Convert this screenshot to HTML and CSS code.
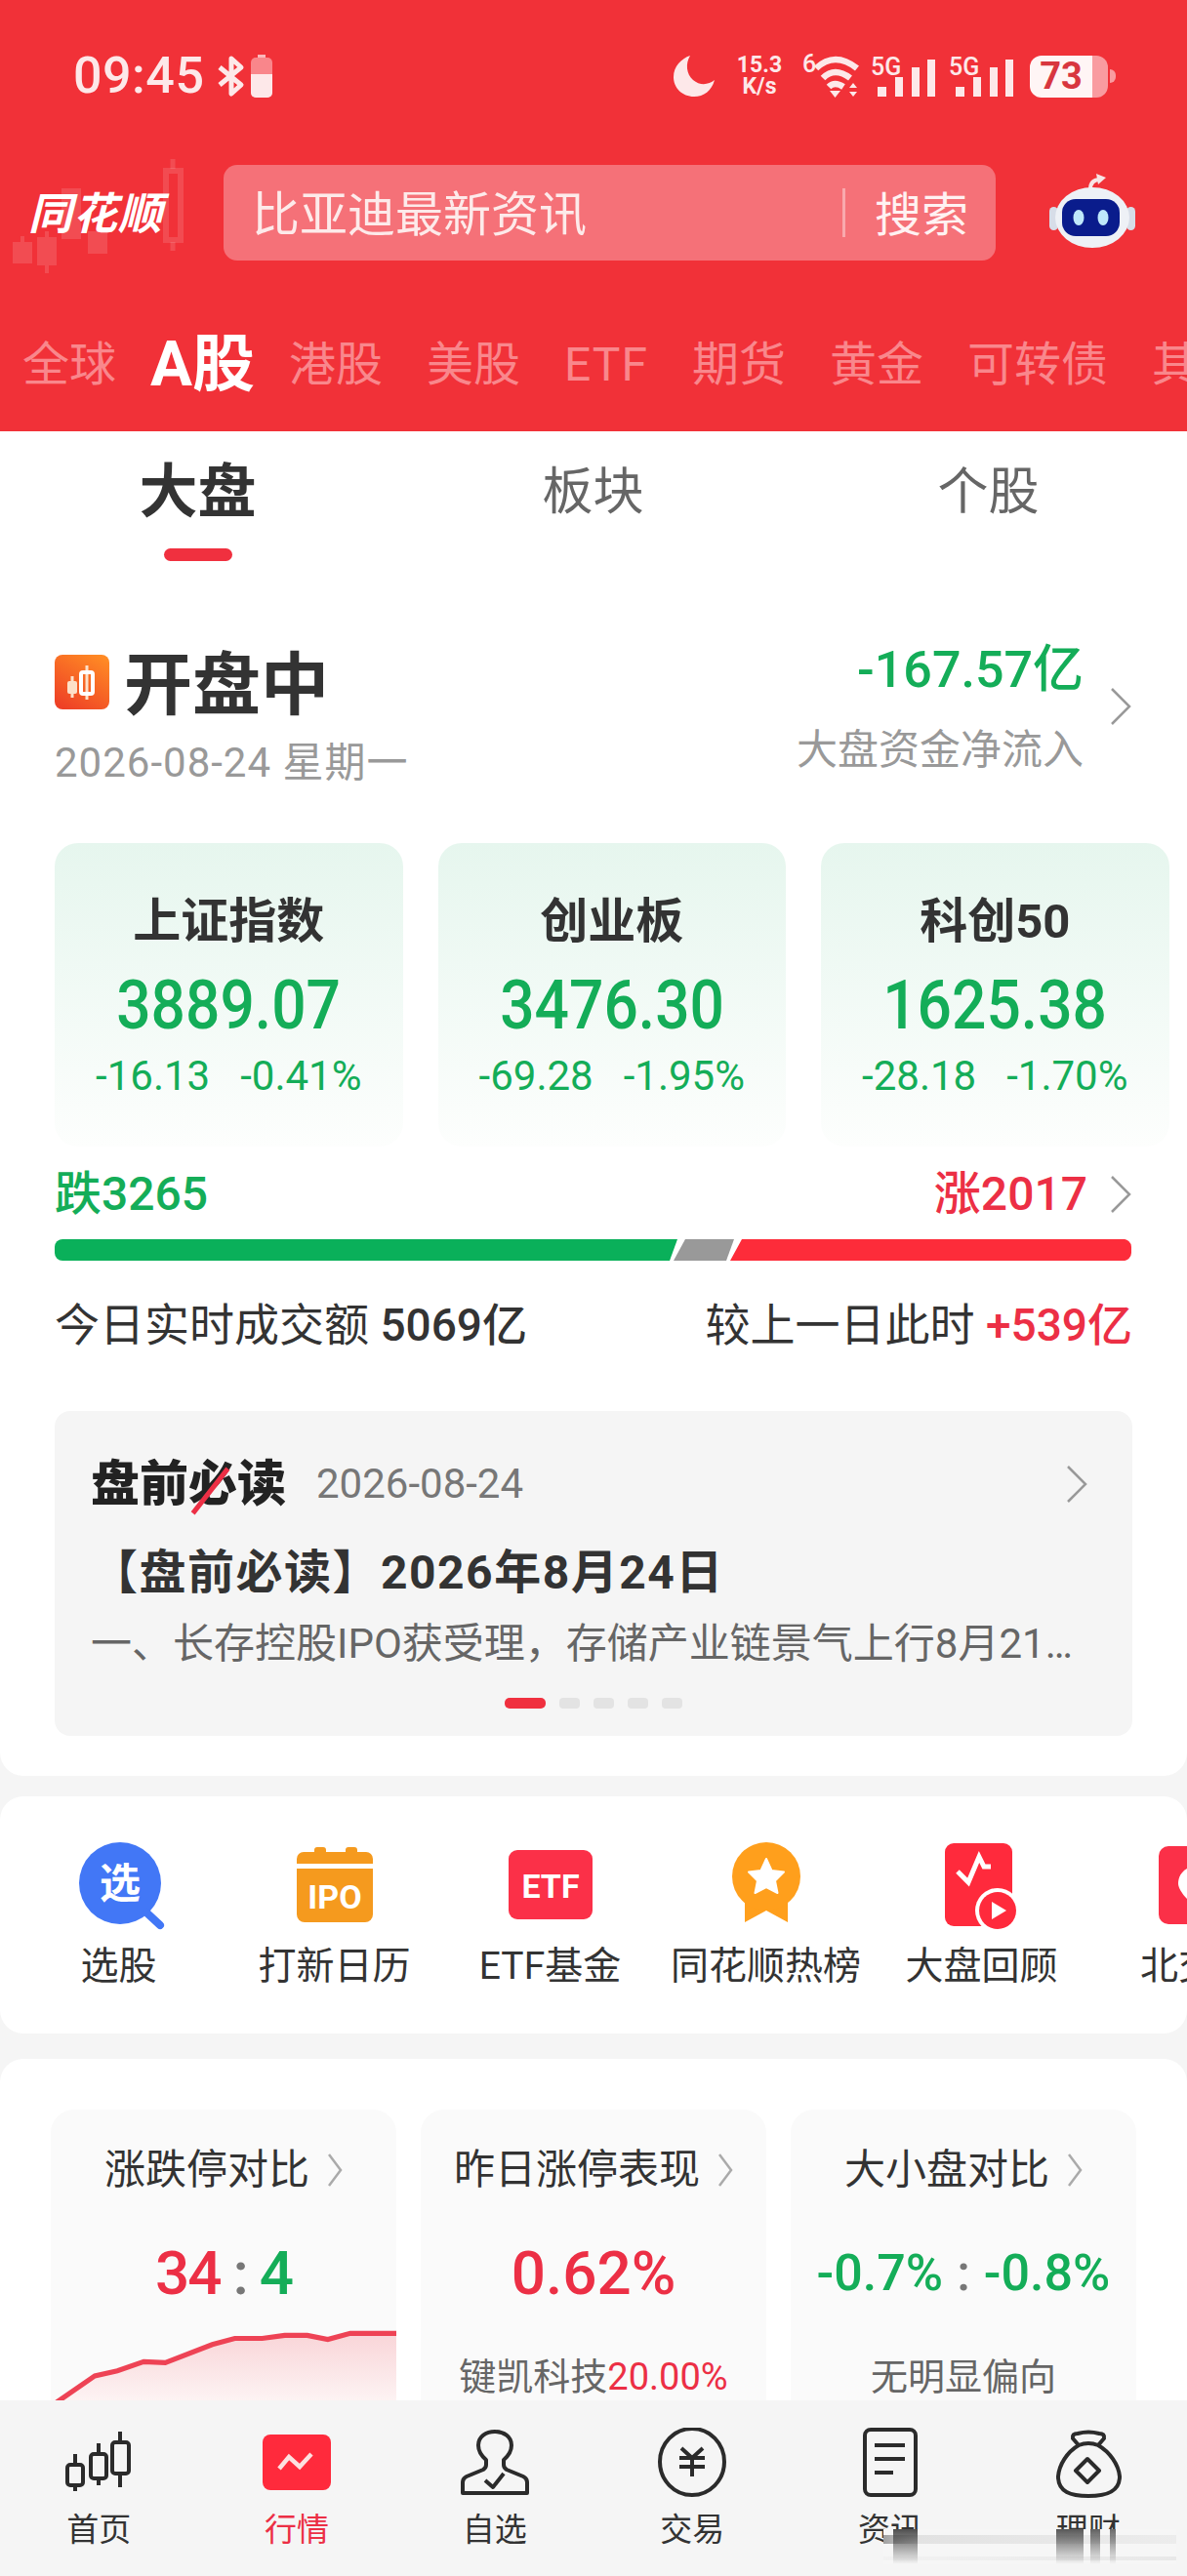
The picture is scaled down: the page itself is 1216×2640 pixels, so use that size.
FILE: index.html
```html
<!DOCTYPE html>
<html lang="zh-CN">
<head>
    <meta charset="UTF-8">
    <meta name="viewport" content="width=device-width, initial-scale=1.0">
    <title>同花顺 - 行情</title>
    <link rel="stylesheet" href="styles.css">
</head>
<body>

    <!-- 顶部红色区域 -->
    <header class="top">
        <div class="status">
            <div class="status-left">
                <span class="clock">09:45</span>
                <svg class="bt" viewBox="0 0 32 44"><path d="M4 13 L26 31 L16 40 V4 L26 13 L4 31" fill="none" stroke="#fde8e9" stroke-width="5" stroke-linejoin="round"/></svg>
                <svg class="mini-batt" viewBox="0 0 22 44"><rect x="7" y="0" width="8" height="4" fill="#fbb7ba"/><rect x="0" y="3" width="22" height="41" rx="5" fill="#f9868b"/><path d="M0 20 H22 V39 a5 5 0 0 1 -5 5 H5 a5 5 0 0 1 -5 -5 Z" fill="#fde8e9"/></svg>
            </div>
            <div class="status-right">
                <svg class="moon" viewBox="0 0 42 42"><path d="M17 0 C8 3 0 11 0 22 C0 33 9 42 21 42 C31 42 39 36 42 25 C36 30 27 31 20 25 C13 19 12 8 17 0 Z" fill="#fde8e9"/></svg>
                <div class="speed"><span>15.3</span><span>K/s</span></div>
                <svg class="wifi" viewBox="0 0 58 46">
                    <text x="0" y="19" class="sig-text">6</text>
                    <path d="M14 15 Q33 -3 56 15 M21 25 Q33 13 49 25 M27 34 Q33 28 42 34" fill="none" stroke="#fde8e9" stroke-width="6.5"/>
                    <path d="M28 38 H39 L33.5 45 Z M48 35 L52 30 L56 35 Z M48 39 H56 L52 44 Z" fill="#fde8e9"/>
                </svg>
                <svg class="signal" viewBox="0 0 68 44"><text x="0" y="21" class="sig-text">5G</text><path d="M7 33 H16 V43 H7 Z M25 23 H33 V43 H25 Z M42 13 H50 V43 H42 Z M58 5 H66 V43 H58 Z" fill="#fde8e9"/></svg>
                <svg class="signal" viewBox="0 0 68 44"><text x="0" y="21" class="sig-text">5G</text><path d="M7 33 H16 V43 H7 Z M25 23 H33 V43 H25 Z M42 13 H50 V43 H42 Z M58 5 H66 V43 H58 Z" fill="#fde8e9"/></svg>
                <div class="battery"><div class="battery-body"><span class="battery-num">73</span></div><i class="battery-cap"></i></div>
            </div>
        </div>

        <div class="search-row">
            <div class="logo">
                <svg class="logo-candles" viewBox="0 0 200 130">
                    <g fill="#fff" opacity="0.13">
                        <path d="M13 88 H33 V110 H13 Z M21 82 H25 V88 H21 Z"/>
                        <path d="M38 83 H58 V112 H38 Z M46 77 H50 V120 H46 Z"/>
                        <path d="M63 33 H83 V85 H63 Z"/>
                        <path d="M90 77 H110 V100 H90 Z"/>
                    </g>
                    <path d="M177 3 V13 M177 88 V97" stroke="#fff" stroke-width="5" opacity="0.13"/>
                    <rect x="170" y="15" width="15" height="71" fill="none" stroke="#fff" stroke-width="6" opacity="0.13"/>
                </svg>
                <span class="logo-text">同花顺</span>
            </div>
            <div class="search-box">
                <span class="search-hint">比亚迪最新资讯</span>
                <span class="search-btn">搜索</span>
            </div>
            <svg class="robot" viewBox="0 0 88 80">
                <path d="M42 18 Q42 8 52 8" fill="none" stroke="#f7e4e6" stroke-width="4"/>
                <path d="M48 2 L58 6 L50 13 Z" fill="#f7e4e6"/>
                <rect x="0" y="36" width="9" height="24" rx="4.5" fill="#d7dde8"/>
                <rect x="79" y="36" width="9" height="24" rx="4.5" fill="#d7dde8"/>
                <ellipse cx="44" cy="47" rx="38" ry="31" fill="#eef1f6"/>
                <rect x="13" y="28" width="59" height="38" rx="14" fill="#0a1c8c"/>
                <ellipse cx="30" cy="47" rx="5.5" ry="8" fill="#bfe8fb"/>
                <ellipse cx="55" cy="47" rx="5.5" ry="8" fill="#bfe8fb"/>
            </svg>
        </div>

        <nav class="market-tabs">
            <span>全球</span>
            <span class="active">A股</span>
            <span>港股</span>
            <span>美股</span>
            <span class="etf">ETF</span>
            <span>期货</span>
            <span>黄金</span>
            <span>可转债</span>
            <span>其他</span>
        </nav>
    </header>

    <main class="content">

        <section class="panel panel-market">
            <div class="sub-tabs">
                <div class="sub-tab active">大盘<i></i></div>
                <div class="sub-tab">板块</div>
                <div class="sub-tab">个股</div>
            </div>

            <div class="summary">
                <div>
                    <div class="summary-title">
                        <svg class="open-icon" viewBox="0 0 56 56">
                            <defs><linearGradient id="openGrad" x1="0.8" y1="0" x2="0.2" y2="1"><stop offset="0" stop-color="#ff8a24"/><stop offset="1" stop-color="#ee4026"/></linearGradient></defs>
                            <rect width="56" height="56" rx="8" fill="url(#openGrad)"/>
                            <path d="M18 22 V44 M33 11 V46" stroke="#fde0c8" stroke-width="3"/>
                            <rect x="13" y="27" width="10" height="13" rx="2" fill="#fde0c8"/>
                            <rect x="27" y="18" width="12" height="22" rx="2" fill="none" stroke="#fff" stroke-width="4"/>
                        </svg>
                        <span class="summary-name">开盘中</span>
                    </div>
                    <div class="summary-date">2026-08-24 星期一</div>
                </div>
                <div class="flow">
                    <div class="flow-text">
                        <div class="flow-num">-167.57亿</div>
                        <div class="flow-label">大盘资金净流入</div>
                    </div>
                    <svg class="chev chev-big" viewBox="0 0 24 40"><path d="M3 2 L21 20 L3 38" fill="none" stroke="#999" stroke-width="2.5"/></svg>
                </div>
            </div>

            <div class="index-cards">
                <div class="index-card">
                    <div class="index-name">上证指数</div>
                    <div class="index-num"><span>3889.07</span></div>
                    <div class="index-sub"><span>-16.13</span><span>-0.41%</span></div>
                </div>
                <div class="index-card">
                    <div class="index-name">创业板</div>
                    <div class="index-num"><span>3476.30</span></div>
                    <div class="index-sub"><span>-69.28</span><span>-1.95%</span></div>
                </div>
                <div class="index-card">
                    <div class="index-name">科创50</div>
                    <div class="index-num"><span>1625.38</span></div>
                    <div class="index-sub"><span>-28.18</span><span>-1.70%</span></div>
                </div>
            </div>

            <div class="updown">
                <span class="green">跌3265</span>
                <div class="updown-right">
                    <span class="red">涨2017</span>
                    <svg class="chev chev-big" viewBox="0 0 24 40"><path d="M3 2 L21 20 L3 38" fill="none" stroke="#999" stroke-width="2.5"/></svg>
                </div>
            </div>

            <svg class="ratio-bar" viewBox="0 0 1104 22">
                <path d="M8 0 H638 L630 22 H8 A8 8 0 0 1 0 14 V8 A8 8 0 0 1 8 0 Z" fill="#0ab05a"/>
                <path d="M646 0 H696 L688 22 H634 Z" fill="#999"/>
                <path d="M704 0 H1094 A8 8 0 0 1 1103 8 V14 A8 8 0 0 1 1094 22 H692 Z" fill="#fd2c3a"/>
            </svg>

            <div class="volume">
                <div>今日实时成交额 <b>5069亿</b></div>
                <div>较上一日此时 <b class="red">+539亿</b></div>
            </div>

            <div class="read-card">
                <div class="read-head">
                    <div class="read-brand">
                        <span class="read-logo">盘前必读<i class="read-slash"></i></span>
                        <span class="read-date">2026-08-24</span>
                    </div>
                    <svg class="chev chev-big" viewBox="0 0 24 40"><path d="M3 2 L21 20 L3 38" fill="none" stroke="#999" stroke-width="2.5"/></svg>
                </div>
                <div class="read-title">【盘前必读】2026年8月24日</div>
                <div class="read-text">一、长存控股IPO获受理，存储产业链景气上行8月21…</div>
                <div class="read-dots"><i class="on"></i><i></i><i></i><i></i><i></i></div>
            </div>
        </section>

        <!-- 快捷入口 -->
        <section class="panel panel-shortcuts">
            <div class="shortcut">
                <svg class="shortcut-icon" viewBox="0 0 100 90">
                    <circle cx="51" cy="42" r="42" fill="#4277f6"/>
                    <path d="M78 72 L92 85" stroke="#4277f6" stroke-width="8" stroke-linecap="round"/>
                    <text x="51" y="57" class="icon-text" font-size="42">选</text>
                </svg>
                <span>选股</span>
            </div>
            <div class="shortcut">
                <svg class="shortcut-icon" viewBox="0 0 100 90">
                    <path d="M29 10 V8 a3 3 0 0 1 3 -3 H38 a3 3 0 0 1 3 3 V10 Z M61 10 V8 a3 3 0 0 1 3 -3 H70 a3 3 0 0 1 3 3 V10 Z" fill="#f59a1e"/>
                    <path d="M11 22 V17 a7 7 0 0 1 7 -7 H82 a7 7 0 0 1 7 7 V22 Z" fill="#f59a1e"/>
                    <path d="M11 27 H89 V74 a8 8 0 0 1 -8 8 H19 a8 8 0 0 1 -8 -8 Z" fill="#f59a1e"/>
                    <text x="50" y="68" class="icon-text" font-size="34">IPO</text>
                </svg>
                <span>打新日历</span>
            </div>
            <div class="shortcut">
                <svg class="shortcut-icon" viewBox="0 0 100 90">
                    <rect x="7" y="8" width="86" height="71" rx="9" fill="#fb3048"/>
                    <text x="50" y="57" class="icon-text" font-size="34">ETF</text>
                </svg>
                <span>ETF基金</span>
            </div>
            <div class="shortcut">
                <svg class="shortcut-icon" viewBox="0 0 100 90">
                    <path d="M28 58 V82 L50 70 L72 82 V58 Z" fill="#ff9f1c"/>
                    <circle cx="50" cy="35" r="35" fill="#ff9f1c"/>
                    <path d="M50 17 L55.5 29 L68 30.5 L59 39.5 L61.5 52 L50 46 L38.5 52 L41 39.5 L32 30.5 L44.5 29 Z" fill="#fff" stroke="#fff" stroke-width="2" stroke-linejoin="round"/>
                </svg>
                <span>同花顺热榜</span>
            </div>
            <div class="shortcut">
                <svg class="shortcut-icon" viewBox="0 0 100 90">
                    <rect x="12" y="1" width="69" height="85" rx="9" fill="#ff2a3c"/>
                    <path d="M25 30 L36 41 L47 15 L52 25 H59" fill="none" stroke="#fff" stroke-width="5"/>
                    <circle cx="66" cy="70" r="23" fill="#fff"/>
                    <circle cx="66" cy="70" r="19" fill="#ff2a3c"/>
                    <path d="M60 61 L75 70 L60 79 Z" fill="#fff"/>
                </svg>
                <span>大盘回顾</span>
            </div>
            <div class="shortcut">
                <svg class="shortcut-icon" viewBox="0 0 100 90">
                    <rect x="10" y="4" width="88" height="80" rx="10" fill="#fb3048"/>
                    <path d="M50 24 C39 24 30 32 30 42 C30 50 40 60 50 68 C60 60 70 50 70 42 C70 32 61 24 50 24 Z" fill="#fff"/>
                </svg>
                <span>北交所</span>
            </div>
        </section>

        <!-- 市场对比 -->
        <section class="panel panel-compare">
            <div class="compare-card">
                <div class="compare-title">涨跌停对比<svg class="chev" viewBox="0 0 16 36"><path d="M2 2 L14 18 L2 34" fill="none" stroke="#aaa" stroke-width="2.5"/></svg></div>
                <div class="compare-value compare-value-ratio"><span class="red">34</span><em>:</em><span class="green">4</span></div>
                <svg class="compare-chart" viewBox="0 0 353 75" preserveAspectRatio="none">
                    <defs><linearGradient id="chartFill" x1="0" y1="0" x2="0" y2="1"><stop offset="0" stop-color="#f9d5d8"/><stop offset="1" stop-color="#fdf4f4"/></linearGradient></defs>
                    <path d="M6 75 L45 49 L68 44 L95 35 L117 36 L165 18 L188 12 L216 12 L239 9 L262 9 L283 13 L306 7 L353 7 V75 Z" fill="url(#chartFill)"/>
                    <path d="M6 75 L45 49 L68 44 L95 35 L117 36 L165 18 L188 12 L216 12 L239 9 L262 9 L283 13 L306 7 L353 7" fill="none" stroke="#ee4355" stroke-width="5"/>
                </svg>
            </div>
            <div class="compare-card">
                <div class="compare-title">昨日涨停表现<svg class="chev" viewBox="0 0 16 36"><path d="M2 2 L14 18 L2 34" fill="none" stroke="#aaa" stroke-width="2.5"/></svg></div>
                <div class="compare-value"><span class="red">0.62%</span></div>
                <div class="compare-sub">键凯科技<span class="red">20.00%</span></div>
            </div>
            <div class="compare-card">
                <div class="compare-title">大小盘对比<svg class="chev" viewBox="0 0 16 36"><path d="M2 2 L14 18 L2 34" fill="none" stroke="#aaa" stroke-width="2.5"/></svg></div>
                <div class="compare-value compare-value-small"><span class="green">-0.7%</span><em>:</em><span class="green">-0.8%</span></div>
                <div class="compare-sub">无明显偏向</div>
            </div>
        </section>
    </main>

    <!-- 底部导航 -->
    <footer class="tabbar">
        <div class="tab">
            <svg viewBox="0 0 72 72" fill="none" stroke="#2b2b2b" stroke-width="4">
                <path d="M12 27 V38 M12 59 V65 M36 16 V27 M36 52 V59 M58 4 V15 M58 47 V61"/>
                <rect x="4" y="38" width="16" height="21" rx="3"/>
                <rect x="28" y="27" width="16" height="25" rx="3"/>
                <rect x="50" y="15" width="17" height="32" rx="3"/>
            </svg>
            <span>首页</span>
        </div>
        <div class="tab active">
            <svg viewBox="0 0 72 72">
                <rect x="1" y="7" width="70" height="57" rx="8" fill="#ff2a3c"/>
                <path d="M18 42 L28 30 L39 40 L51 27" fill="none" stroke="#fde0e0" stroke-width="4.5"/>
            </svg>
            <span>行情</span>
        </div>
        <div class="tab">
            <svg viewBox="0 0 72 72" fill="none" stroke="#2b2b2b" stroke-width="4" stroke-linejoin="round">
                <path d="M3 67 V56 Q3 52 7 50 L24 43 Q27 41 27 38 V33 Q19 26 19 18 C19 9 27 4 36 4 C45 4 53 9 53 18 Q53 26 45 33 V38 Q45 41 48 43 L65 50 Q69 52 69 56 V67 Z"/>
                <path d="M26 54 L34 61 L45 47"/>
            </svg>
            <span>自选</span>
        </div>
        <div class="tab">
            <svg viewBox="0 0 72 72" fill="none" stroke="#2b2b2b" stroke-width="4">
                <ellipse cx="36" cy="35" rx="33" ry="34"/>
                <path d="M25 21 L36 31 L47 21 M23 31 H49 M23 40 H49 M36 31 V50"/>
            </svg>
            <span>交易</span>
        </div>
        <div class="tab">
            <svg viewBox="0 0 72 72" fill="none" stroke="#2b2b2b" stroke-width="4">
                <rect x="10" y="2" width="52" height="67" rx="6"/>
                <path d="M20 18 H51 M20 32 H51 M20 46 H39"/>
            </svg>
            <span>资讯</span>
        </div>
        <div class="tab">
            <svg viewBox="0 0 72 72" fill="none" stroke="#2b2b2b" stroke-width="4" stroke-linejoin="round">
                <path d="M26 18 C14 25 6 38 5 50 C5 66 18 70 36 70 C54 70 68 66 68 50 C67 38 58 25 46 18"/>
                <path d="M26 18 L20 11 Q19 6 25 6 Q36 3 47 6 Q53 6 52 11 L46 18 Q36 14 26 18 Z"/>
                <path d="M35 32 L47 44 L35 56 L23 44 Z"/>
            </svg>
            <span>理财</span>
        </div>
        <!-- 截图水印涂抹痕迹 -->
        <div class="smear"></div>
    </footer>

</body>
</html>
```
FILE: styles.css
```css
* {
    box-sizing: border-box;
}

body {
    margin: 0;
    width: 1216px;
    height: 2640px;
    display: flex;
    flex-direction: column;
    overflow: hidden;
    font-family: Roboto, "Noto Sans CJK SC", sans-serif;
    background-color: #f5f5f5;
    color: #333;
}

.green {
    color: #14ad58;
}

.red {
    color: #ec2f45;
}

.chev {
    display: block;
    flex: none;
}

.chev-big {
    width: 24px;
    height: 40px;
}

/* 顶部 */
.top {
    height: 442px;
    flex: none;
    padding-top: 42px;
    background-color: #f13138;
    overflow: hidden;
}

.status {
    height: 72px;
    display: flex;
    justify-content: space-between;
    align-items: center;
    padding: 0 73px 0 75px;
}

.status-left,
.status-right {
    display: flex;
    align-items: center;
}

.clock {
    font-size: 52px;
    line-height: 60px;
    font-weight: 500;
    letter-spacing: 0.5px;
    color: #fde8e9;
}

.bt {
    width: 32px;
    height: 44px;
    margin-left: 12px;
}

.mini-batt {
    width: 22px;
    height: 44px;
    margin-left: 4px;
}

.moon {
    width: 42px;
    height: 42px;
}

.speed {
    display: flex;
    flex-direction: column;
    align-items: center;
    width: 60px;
    margin-left: 16px;
    font-size: 23px;
    line-height: 22px;
    font-weight: 700;
    color: #fde8e9;
}

.wifi {
    width: 58px;
    height: 46px;
    margin-left: 14px;
    overflow: visible;
}

.signal {
    width: 68px;
    height: 44px;
    margin-left: 12px;
    overflow: visible;
}

.sig-text {
    font-family: Roboto, sans-serif;
    font-size: 25px;
    font-weight: 500;
    fill: #fde8e9;
}

.battery {
    display: flex;
    align-items: center;
    margin-left: 15px;
}

.battery-body {
    width: 80px;
    height: 43px;
    border-radius: 12px;
    background: linear-gradient(90deg, #fff5f5 80%, #f99ba0 80%);
    text-align: center;
}

.battery-num {
    display: block;
    width: 64px;
    font-size: 38px;
    line-height: 43px;
    font-weight: 700;
    color: #d8363f;
}

.battery-cap {
    width: 6px;
    height: 14px;
    margin-left: 2px;
    border-radius: 0 6px 6px 0;
    background-color: #f99ba0;
}

.search-row {
    display: flex;
    align-items: center;
    height: 98px;
    margin-top: 55px;
    position: relative;
}

.logo {
    width: 229px;
    padding-left: 29px;
    flex: none;
}

.logo-text {
    position: relative;
    top: 2px;
    font-size: 45px;
    line-height: 50px;
    font-style: italic;
    font-weight: 700;
    color: #fff;
    letter-spacing: 1px;
}

.logo-candles {
    position: absolute;
    left: 0;
    top: -9px;
    width: 200px;
    height: 130px;
}

.search-box {
    width: 791px;
    height: 98px;
    display: flex;
    align-items: center;
    justify-content: space-between;
    padding: 0 28px 0 29px;
    border-radius: 14px;
    background-color: #f57178;
    color: #fdeaea;
    font-size: 49px;
    line-height: 60px;
}

.search-hint {
    padding-top: 5px;
}

.search-btn {
    padding: 6px 0 0 30px;
    border-left: 3px solid #f9a9ad;
    font-size: 48px;
    line-height: 44px;
    color: #fff2f2;
}

.robot {
    width: 88px;
    height: 80px;
    margin-left: 55px;
    margin-top: -4px;
}

.market-tabs {
    display: flex;
    align-items: center;
    gap: 45px;
    height: 84px;
    margin-top: 63px;
    padding: 3px 0 0 23px;
    white-space: nowrap;
    font-size: 48px;
    line-height: 60px;
    color: #f9878c;
}

.market-tabs .active {
    margin: 0 -10px;
    font-size: 64px;
    font-weight: 700;
    color: #fff;
}

.market-tabs .etf {
    letter-spacing: 1px;
}

/* 面板 */
.content {
    flex: 1;
    min-height: 0;
    overflow: hidden;
}

.panel {
    background-color: #fff;
}

.panel-market {
    height: 1378px;
    padding-bottom: 42px;
    border-radius: 0 0 24px 24px;
}

.sub-tabs {
    display: grid;
    grid-template-columns: repeat(3, 405px);
    height: 138px;
    padding-top: 33px;
}

.sub-tab {
    display: flex;
    flex-direction: column;
    align-items: center;
    font-size: 52px;
    line-height: 60px;
    color: #666;
}

.sub-tab.active {
    font-size: 60px;
    font-weight: 700;
    color: #333;
}

.sub-tab i {
    width: 70px;
    height: 13px;
    margin-top: 27px;
    border-radius: 7px;
    background-color: #f0303f;
}

.summary {
    display: flex;
    justify-content: space-between;
    padding: 75px 56px 0;
}

.summary-title {
    display: flex;
    align-items: center;
    gap: 15px;
    height: 78px;
    margin-top: 5px;
}

.summary-name {
    position: relative;
    top: 4px;
    font-size: 70px;
    line-height: 78px;
    font-weight: 700;
}

.open-icon {
    width: 56px;
    height: 56px;
}

.summary-date {
    margin-top: 20px;
    font-size: 42px;
    line-height: 48px;
    letter-spacing: 1px;
    color: #999;
}

.flow {
    display: flex;
    align-items: center;
    gap: 26px;
    height: 138px;
}

.flow-text {
    padding-top: 3px;
    text-align: right;
}

.flow-num {
    font-size: 52px;
    line-height: 60px;
    font-weight: 500;
    color: #14ad58;
}

.flow-label {
    margin-top: 27px;
    font-size: 42px;
    line-height: 50px;
    color: #999;
}

.index-cards {
    display: grid;
    grid-template-columns: repeat(3, 356.5px);
    gap: 36px;
    margin-top: 58px;
    padding-left: 56px;
}

.index-card {
    height: 311px;
    padding-top: 51px;
    border-radius: 24px;
    background: linear-gradient(180deg, #e6f6ee 0%, #fdfefd 100%);
    text-align: center;
}

.index-name {
    font-size: 49px;
    line-height: 60px;
    font-weight: 700;
}

.index-num {
    margin-top: 18px;
    font-size: 70px;
    line-height: 74px;
    font-weight: 500;
    color: #14ad58;
}

.index-num span {
    display: inline-block;
    transform: scaleX(0.89);
}

.index-sub {
    display: flex;
    justify-content: center;
    gap: 31px;
    margin-top: 11px;
    font-size: 42px;
    line-height: 50px;
    color: #14ad58;
}

.updown {
    display: flex;
    justify-content: space-between;
    align-items: center;
    height: 56px;
    margin-top: 20px;
    padding: 2px 56px 0;
    font-size: 48px;
    line-height: 56px;
    font-weight: 500;
}

.updown-right {
    display: flex;
    align-items: center;
    gap: 22px;
}

.ratio-bar {
    display: block;
    width: 1104px;
    height: 22px;
    margin: 19px 0 0 56px;
}

.volume {
    display: flex;
    justify-content: space-between;
    margin-top: 36px;
    padding: 0 56px;
    font-size: 46px;
    line-height: 60px;
}

.volume b {
    font-weight: 500;
}

.read-card {
    height: 333px;
    margin: 58px 56px 0;
    padding: 45px 37px 0;
    border-radius: 16px;
    background-color: #f5f5f5;
}

.read-head {
    display: flex;
    justify-content: space-between;
    align-items: center;
    height: 60px;
    padding-right: 8px;
}

.read-brand {
    display: flex;
    align-items: center;
    gap: 31px;
}

.read-logo {
    position: relative;
    font-size: 50px;
    line-height: 60px;
    font-weight: 900;
    color: #222;
}

.read-slash {
    position: absolute;
    left: 120px;
    top: 8px;
    width: 5px;
    height: 58px;
    background-color: #ec2f45;
    transform: rotate(38deg);
}

.read-date {
    font-size: 42px;
    line-height: 60px;
    color: #777;
}

.read-title {
    margin-top: 33px;
    font-size: 48px;
    line-height: 56px;
    font-weight: 700;
    letter-spacing: 1.5px;
}

.read-text {
    margin-top: 20px;
    font-size: 42px;
    line-height: 50px;
    white-space: nowrap;
    color: #666;
}

.read-dots {
    display: flex;
    justify-content: center;
    gap: 14px;
    margin-top: 30px;
}

.read-dots i {
    width: 21px;
    height: 11px;
    border-radius: 4px;
    background-color: #e3e3e3;
}

.read-dots .on {
    width: 42px;
    border-radius: 5px;
    background-color: #f0303f;
}

/* 快捷入口 */
.panel-shortcuts {
    display: flex;
    height: 243px;
    margin-top: 21px;
    padding: 47px 0 0 11px;
    border-radius: 24px;
    overflow: hidden;
}

.shortcut {
    display: flex;
    flex-direction: column;
    align-items: center;
    flex: none;
    width: 221px;
    font-size: 39px;
    line-height: 50px;
    white-space: nowrap;
}

.shortcut-icon {
    width: 100px;
    height: 90px;
    margin-bottom: 12px;
}

.icon-text {
    font-family: Roboto, "Noto Sans CJK SC", sans-serif;
    font-weight: 700;
    fill: #fff;
    text-anchor: middle;
}

/* 市场对比 */
.panel-compare {
    display: grid;
    grid-template-columns: repeat(3, 354px);
    gap: 25px;
    height: 400px;
    margin-top: 26px;
    padding: 52px 0 0 52px;
    border-radius: 24px 24px 0 0;
}

.compare-card {
    padding-top: 34px;
    border-radius: 24px 24px 0 0;
    background-color: #fafafa;
    text-align: center;
}

.compare-title {
    display: flex;
    justify-content: center;
    align-items: center;
    gap: 18px;
    font-size: 42px;
    line-height: 56px;
}

.compare-title .chev {
    width: 16px;
    height: 36px;
}

.compare-value {
    display: flex;
    justify-content: center;
    align-items: center;
    gap: 20px;
    height: 70px;
    margin-top: 42px;
    font-size: 62px;
    font-weight: 500;
}

.compare-value em {
    font-style: normal;
    color: #777;
}

.compare-value-ratio {
    gap: 13px;
    letter-spacing: -2px;
}

.compare-value-small {
    gap: 14px;
    font-size: 52px;
}

.compare-chart {
    display: block;
    width: 100%;
    height: 78px;
    margin-top: 20px;
}

.compare-sub {
    margin-top: 47px;
    font-size: 38px;
    line-height: 50px;
    color: #666;
}

/* 底部导航 */
.tabbar {
    position: relative;
    flex: none;
    display: grid;
    grid-template-columns: repeat(6, 1fr);
    height: 180px;
    padding-top: 28px;
    background-color: #f5f5f5;
}

.tab {
    display: flex;
    flex-direction: column;
    align-items: center;
    font-size: 33px;
    line-height: 44px;
    color: #333;
}

.tab svg {
    width: 72px;
    height: 72px;
    margin-bottom: 11px;
}

.tab.active {
    color: #ec2f45;
}

.smear {
    position: absolute;
    left: 905px;
    top: 132px;
    width: 300px;
    height: 36px;
    background-color: #f6f6f6;
    background-image:
        linear-gradient(rgba(60, 60, 60, 0.9), rgba(60, 60, 60, 0)),
        linear-gradient(rgba(60, 60, 60, 0.85), rgba(60, 60, 60, 0)),
        linear-gradient(rgba(60, 60, 60, 0.8), rgba(60, 60, 60, 0)),
        linear-gradient(rgba(60, 60, 60, 0.75), rgba(60, 60, 60, 0)),
        linear-gradient(90deg, #a0a0a0, #e2e2e2 12%, #ececec),
        linear-gradient(90deg, #f2f2f2, #e8e8e8);
    background-repeat: no-repeat;
    background-size: 25px 36px, 28px 36px, 10px 36px, 6px 36px, 100% 9px, 100% 4px;
    background-position: 10px 0, 177px 0, 212px 0, 232px 0, 0 6px, 0 28px;
}
```
